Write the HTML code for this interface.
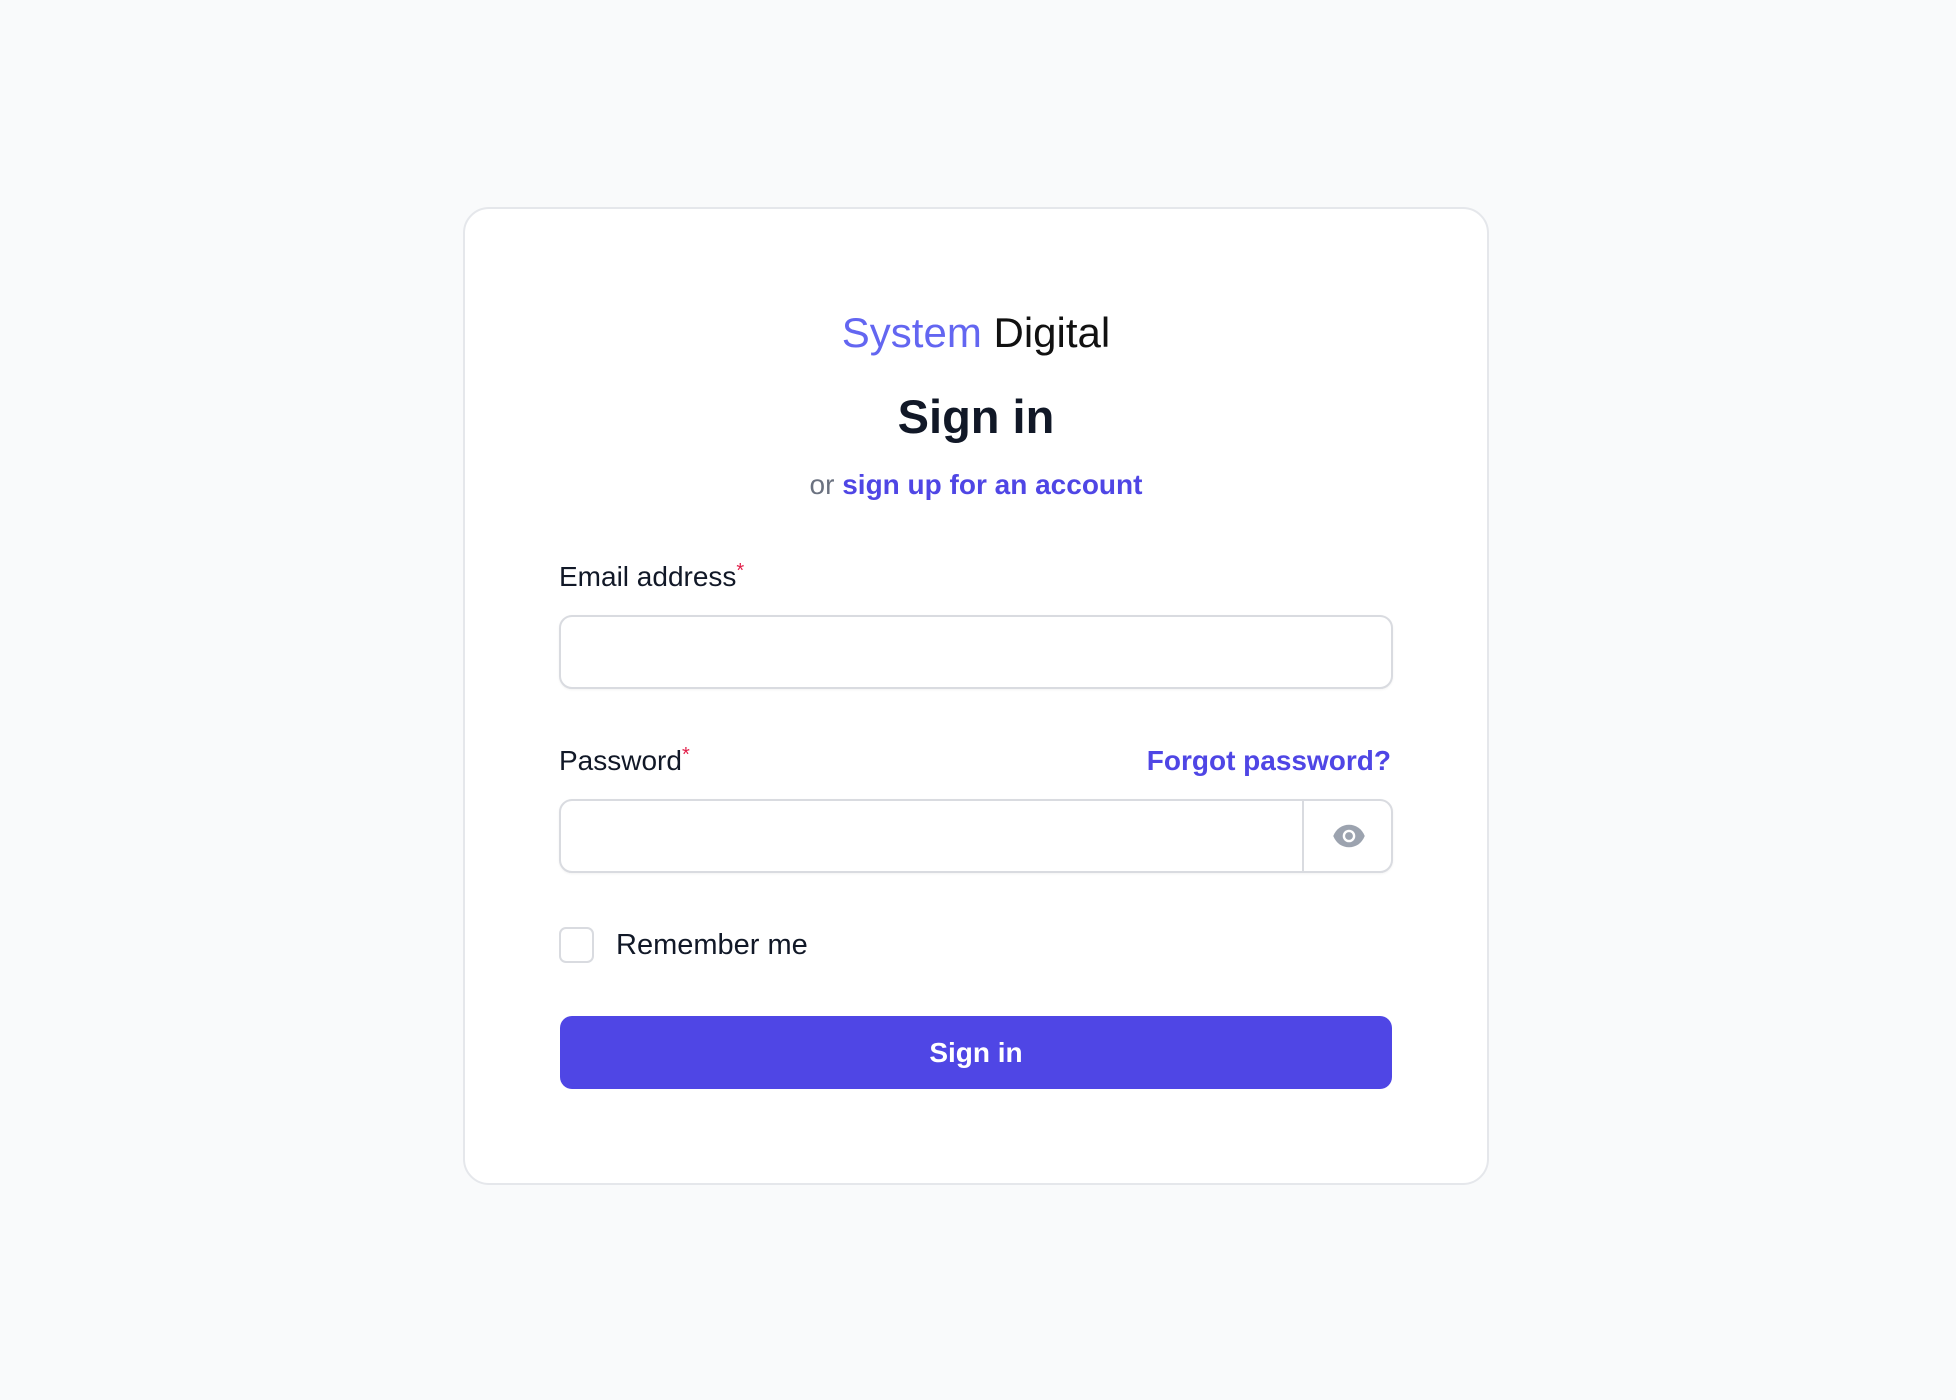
<!DOCTYPE html>
<html><head><meta charset="utf-8"><style>
*{box-sizing:border-box;margin:0;padding:0}
body{width:1956px;height:1400px;background:#f9fafb;font-family:"Liberation Sans",sans-serif;position:relative;overflow:hidden}
.card{position:absolute;left:463px;top:207px;width:1026px;height:978px;background:#fff;border:2px solid #e5e7eb;border-radius:26px}
.abs{position:absolute}
.c{left:0;right:0;text-align:center}
.in{position:absolute;left:94px;width:834px;height:74px;border:2px solid #d9dbe0;border-radius:13px;background:#fff;box-shadow:0 1px 2px rgba(0,0,0,.05)}
.lbl{font-size:28px;color:#111827;font-weight:500}
.req{color:#e11d48;font-size:20px;vertical-align:top;position:relative;top:-6px}
</style></head><body>
<div class="card">
 <div class="abs c" style="top:94px;font-size:42px;line-height:60px;color:#111"><span style="color:#6366f1">System</span> Digital</div>
 <div class="abs c" style="top:178px;font-size:47px;line-height:60px;font-weight:bold;color:#111827">Sign in</div>
 <div class="abs c" style="top:256px;font-size:28px;line-height:40px;color:#6b7280">or <span style="color:#4f46e5;font-weight:bold">sign up for an account</span></div>
 <div class="abs lbl" style="left:94px;top:348px;line-height:40px">Email address<span class="req">*</span></div>
 <div class="in" style="top:406px"></div>
 <div class="abs lbl" style="left:94px;top:532px;line-height:40px">Password<span class="req">*</span></div>
 <div class="abs" style="right:96px;top:532px;line-height:40px;font-size:28px;font-weight:bold;color:#4f46e5">Forgot password?</div>
 <div class="in" style="top:590px">
  <div class="abs" style="left:741px;top:0;bottom:0;border-left:2px solid #d9dbe0"></div>
  <svg class="abs" style="left:768px;top:17px" width="40" height="36" viewBox="0 0 24 24"><path d="M1.5 12C3.5 7 7.5 4.5 12 4.5S20.5 7 22.5 12C20.5 17 16.5 19.5 12 19.5S3.5 17 1.5 12Z" fill="#9ca3af"/><circle cx="12" cy="12" r="4.2" fill="#fff"/><circle cx="12" cy="12" r="2.6" fill="#9ca3af"/></svg>
 </div>
 <div class="abs" style="left:94px;top:718px;width:35px;height:36px;border:2px solid #d9dbe0;border-radius:7px"></div>
 <div class="abs" style="left:151px;top:716px;line-height:40px;font-size:29px;color:#111827">Remember me</div>
 <div class="abs" style="left:95px;top:807px;width:832px;height:73px;background:#4f46e5;border-radius:12px;color:#fff;font-size:28px;font-weight:bold;text-align:center;line-height:73px">Sign in</div>
</div>
</body></html>
